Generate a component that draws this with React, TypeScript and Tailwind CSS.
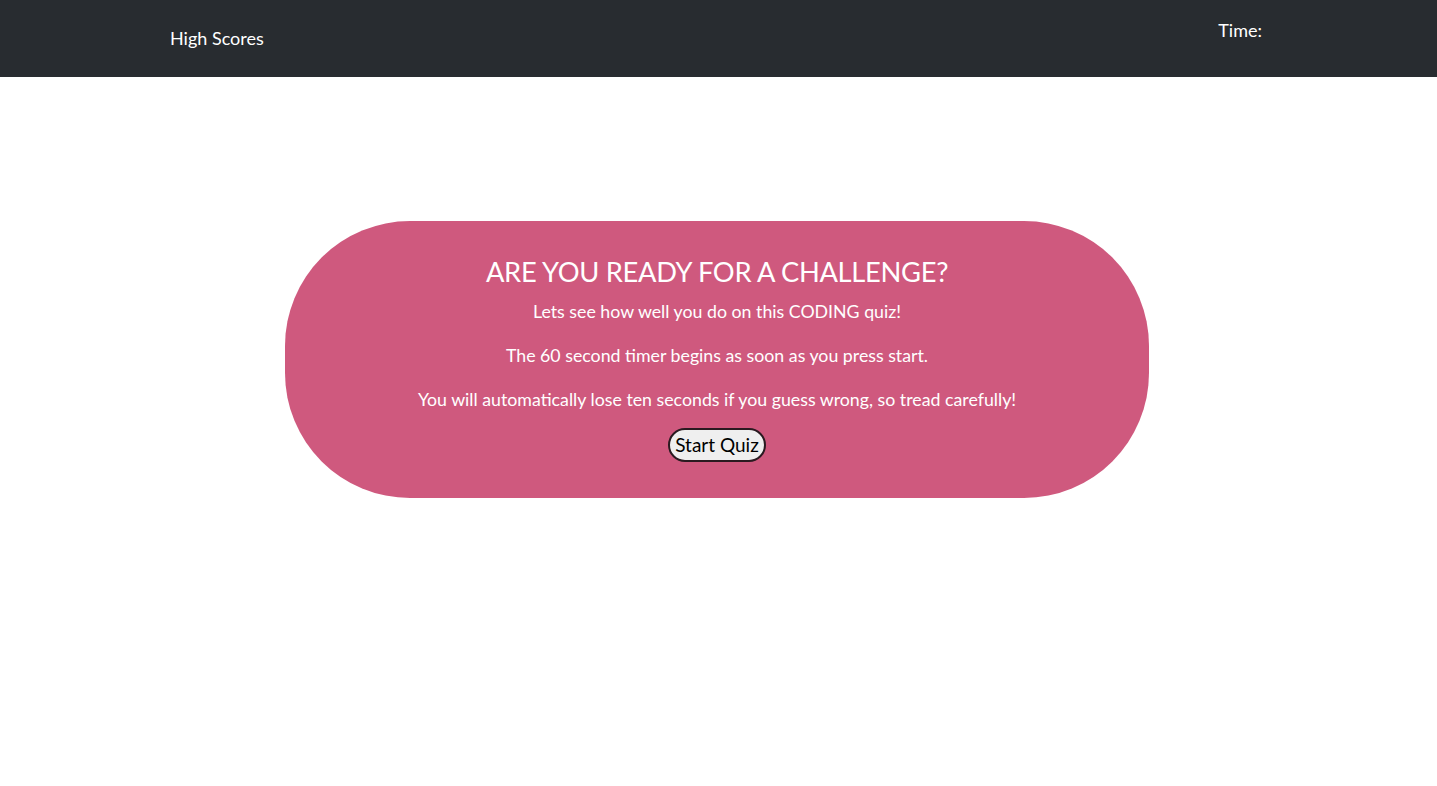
export default function App() {
  return (
    <div className="min-h-[786px] bg-white font-['Lato',sans-serif]">
      <header className="h-[77px] bg-[#282c30] flex justify-between pl-[170px] pr-[175px] text-white">
        <a className="mt-[26px] text-[18px] leading-[24px]">High Scores</a>
        <div className="mt-[18px] text-[18px] leading-[24px]">Time:</div>
      </header>
      <main className="flex justify-center pt-[144px] pr-[3px]">
        <div className="w-[864px] h-[277px] rounded-[125px] bg-[#cf597e] text-white text-center flex flex-col items-center pt-[26px]">
          <h1 className="text-[27.3px] leading-[50px] tracking-[-0.3px]">ARE YOU READY FOR A CHALLENGE?</h1>
          <p className="text-[17.75px] leading-[24px] mt-[2px]">Lets see how well you do on this CODING quiz!</p>
          <p className="text-[17.75px] leading-[24px] mt-[20px]">The 60 second timer begins as soon as you press start.</p>
          <p className="text-[17.75px] leading-[24px] mt-[20px]">You will automatically lose ten seconds if you guess wrong, so tread carefully!</p>
          <button className="mt-[17px] h-[34px] px-[5px] rounded-full bg-[#efefef] border-2 border-[#2a1a20] text-black text-[19px] leading-[24px]">Start Quiz</button>
        </div>
      </main>
    </div>
  );
}
